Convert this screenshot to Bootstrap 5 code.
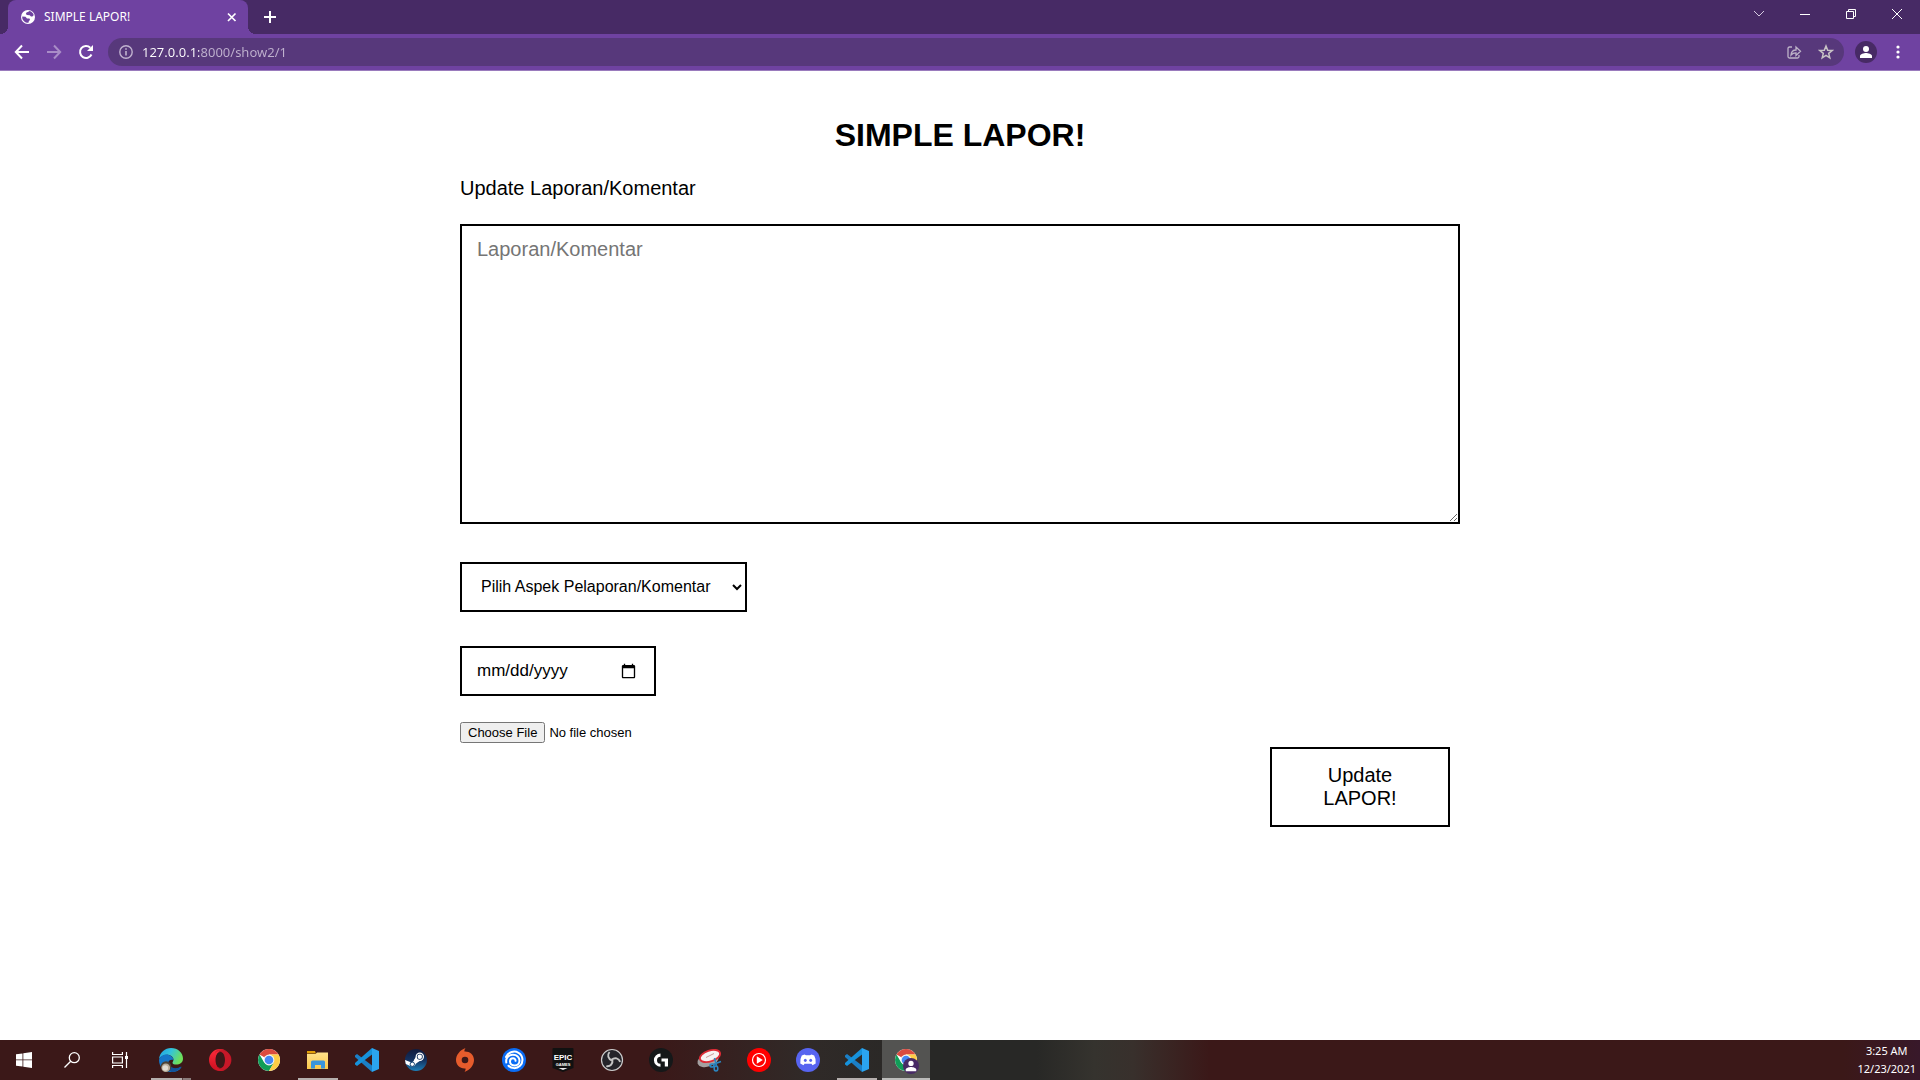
<!DOCTYPE html>
<html lang="id">
<head>
<meta charset="utf-8">
<meta name="viewport" content="width=device-width, initial-scale=1">
<title>SIMPLE LAPOR!</title>
<link href="https://cdn.jsdelivr.net/npm/bootstrap@5.3.0/dist/css/bootstrap.min.css" rel="stylesheet">
<style>
  :root { --strip: #472a65; --bar: #6f42a1; --pill: #57387b; }
  body { font-family: "Liberation Sans", Arial, sans-serif; color: #000; background: #fff; }
  svg { display: block; flex: none; }
  button.plain { background: none; border: 0; padding: 0; color: #fff; display: flex; align-items: center; justify-content: center; }

  /* browser chrome */
  .browser { font-family: "Noto Sans", "Open Sans", sans-serif; color: #fff; }
  .tab-strip { background: var(--strip); height: 34px; padding-left: 8px; }
  .page-tab { position: relative; width: 240px; height: 34px; background: var(--bar); border-radius: 8px 8px 0 0; padding: 0 8px 0 12px; font-size: 12px; }
  .page-tab::before, .page-tab::after { content: ""; position: absolute; bottom: 0; width: 8px; height: 8px; }
  .page-tab::before { left: -8px; background: radial-gradient(circle at 0 0, transparent 8px, var(--bar) 8px); }
  .page-tab::after { right: -8px; background: radial-gradient(circle at 100% 0, transparent 8px, var(--bar) 8px); }
  .page-tab span { line-height: 20px; }
  .new-tab { width: 28px; margin-left: 8px; }
  .win-btn { width: 46px; height: 28px; }
  .tool-bar { background: var(--bar); height: 37px; border-bottom: 1px solid #9a7bbd; padding: 0 6px; }
  .nav-btn { width: 32px; height: 32px; }
  .address { background: var(--pill); height: 28px; border-radius: 14px; padding: 0 10px; margin: 0 6px; }
  .address input { border: 0; outline: 0; padding: 0; height: 24px; font-size: 13px; min-width: 0;
    color: transparent; background: linear-gradient(to right, #fff 57px, #c0b2cf 57px); background-clip: text; -webkit-background-clip: text; }

  /* page */
  .report { width: 100%; max-width: 1000px; }
  .report h1 { font-size: 32px; line-height: 38px; font-weight: 700; margin: 45px 0 22px; }
  .report label.caption { font-size: 20px; line-height: 24px; margin-bottom: 24px; }
  .box { border: 2px solid #000; background: #fff; color: #000; border-radius: 0; }
  .report textarea { height: 300px; padding: 11px 15px; font-size: 20px; line-height: 24px; }
  .report textarea::placeholder { color: #757575; }
  .report select { width: 287px; height: 50px; padding: 0 1px 2px 15px; font-size: 16px; margin-top: 38px; }
  .report input[type=date] { width: 196px; height: 50px; padding: 0 15px; font-size: 17px; margin-top: 34px; }
  .report input[type=file] { font-size: 13px; line-height: 15px; margin-top: 26px; }
  .send { width: 180px; height: 80px; padding: 0 40px; font-size: 20px; line-height: 23px; margin: 4px 10px 0 0; }

  /* taskbar */
  .task-bar { height: 40px; color: #fff; font-family: "Noto Sans", "Open Sans", sans-serif;
    background: linear-gradient(to right, #3b1818 0, #3b1818 34%, #302a28 42%, #282826 48%, #282826 54%, #35332e 57%, #38302c 59%, #3b1818 63%, #3b1818 96%, #38182a 100%); }
  .task-bar button.plain { width: 48px; height: 40px; }
  .apps { gap: 1px; margin-left: 3px; }
  .apps button.plain.opened { background: linear-gradient(#b5afad, #b5afad) bottom / 40px 2px no-repeat; }
  .apps button.plain.stacked { background: linear-gradient(to right, #b5afad 31px, #5d4545 31px, #5d4545 32px, #8a7c7b 32px) bottom / 40px 2px no-repeat; }
  .apps button.plain.current { background: linear-gradient(#bcbcba, #bcbcba) bottom / 48px 2px no-repeat, #535351; }
  .clock { font-size: 11px; line-height: 18px; padding: 2px 4px 0 0; }
</style>
<script src="https://cdn.jsdelivr.net/npm/bootstrap@5.3.0/dist/js/bootstrap.bundle.min.js"></script>
</head>
<body class="d-flex flex-column min-vh-100">

<svg width="0" height="0" class="position-absolute" aria-hidden="true">
  <defs>
    <linearGradient id="edgeA" x1="0" y1="0" x2="1" y2="0.4"><stop offset="0" stop-color="#1f9fe0"/><stop offset=".5" stop-color="#33c3dc"/><stop offset="1" stop-color="#6ee05a"/></linearGradient>
    <linearGradient id="operaA" x1="0" y1="0" x2="0" y2="1"><stop offset="0" stop-color="#ff2b3a"/><stop offset="1" stop-color="#c80f20"/></linearGradient>
    <linearGradient id="steamA" x1="0" y1="0" x2="0" y2="1"><stop offset="0" stop-color="#101a3c"/><stop offset=".5" stop-color="#14315f"/><stop offset="1" stop-color="#1c7fb8"/></linearGradient>
    <linearGradient id="folderA" x1="0" y1="0" x2="0" y2="1"><stop offset="0" stop-color="#ffe18a"/><stop offset="1" stop-color="#fcc84a"/></linearGradient>
    <symbol id="chrome" viewBox="0 0 24 24">
      <circle cx="12" cy="12" r="11" fill="#fff"/>
      <path d="M12 12 2.500 6.500A11 11 0 0 1 21.500 6.500H12z" fill="#db4b3f"/>
      <path d="M2.500 6.500A11 11 0 0 0 12 23l5-8.500-5-2.500-4.700 2.700z" fill="#109d58"/>
      <path d="M21.500 6.500H12l4.800 8.200L12 23A11 11 0 0 0 21.500 6.500z" fill="#fecd45"/>
      <circle cx="12" cy="12" r="5.400" fill="#f4f4f4"/><circle cx="12" cy="12" r="4.300" fill="#4487f4"/>
    </symbol>
    <symbol id="vscode" viewBox="0 0 24 24">
      <path d="M0 7.500 2 6l15 11.500V24L0 9z" fill="#1b7fc6"/>
      <path d="M0 16.500 2 18 17 6.500V0L0 15z" fill="#1692db"/>
      <path d="M17 0 24 3V21l-7 3z" fill="#2ba4ef"/>
    </symbol>
    <symbol id="person" viewBox="0 0 16 16"><circle cx="8" cy="5" r="3" fill="#fff"/><path d="M2 14v-2c0-2 4-3 6-3s6 1 6 3v2z" fill="#fff"/></symbol>
  </defs>
</svg>

<header class="browser">
  <div class="tab-strip d-flex">
    <div class="page-tab d-flex align-items-center">
      <svg width="16" height="16" viewBox="0 0 16 16"><circle cx="8" cy="8" r="7" fill="#fff"/><path d="M6.500 3.500C8 3 9 2.500 9.500 2c2 .5 3.700 2 4.200 4-.8 1.200-1.500 1.800-2.700 1.500L9.700 6.300 7 6 5.800 5zM2.300 7.500 5.500 7.800 7 9.500H9.500l.5 1.200-1.300 1.800-.2 1.300c-3 .3-6-2-6.300-5z" fill="#6f42a1"/></svg>
      <span class="flex-grow-1 ms-2">SIMPLE LAPOR!</span>
      <button class="plain" aria-label="Close tab"><svg width="16" height="16" viewBox="0 0 16 16" stroke="#fff" stroke-width="1.700"><path d="M4 4.500l7.500 7.500M11.500 4.500L4 12"/></svg></button>
    </div>
    <button class="plain new-tab" aria-label="New tab"><svg width="14" height="14" viewBox="0 0 14 14" stroke="#fff" stroke-width="2"><path d="M7 1v12M1 7h12"/></svg></button>
    <div class="d-flex ms-auto">
      <button class="plain win-btn" aria-label="Search tabs"><svg width="12" height="12" viewBox="0 0 12 12" fill="none" stroke="#d5cbe0"><path d="M1 3l5 5 5-5"/></svg></button>
      <button class="plain win-btn" aria-label="Minimize"><svg width="10" height="10" viewBox="0 0 10 10" stroke="#fff"><path d="M0 5.500h10"/></svg></button>
      <button class="plain win-btn" aria-label="Restore"><svg width="10" height="10" viewBox="0 0 10 10" fill="none" stroke="#fff"><path d="M.5 2.500h7v7h-7zM2.500 2.500v-2h7v7h-2"/></svg></button>
      <button class="plain win-btn" aria-label="Close"><svg width="10" height="10" viewBox="0 0 10 10" stroke="#fff"><path d="M0 0l10 10M10 0L0 10"/></svg></button>
    </div>
  </div>
  <div class="tool-bar d-flex align-items-center">
    <button class="plain nav-btn" aria-label="Back"><svg width="16" height="16" viewBox="0 0 16 16" fill="none" stroke="#fff" stroke-width="2"><path d="M15 8H2M8 1.500L1.800 8 8 14.500"/></svg></button>
    <button class="plain nav-btn" aria-label="Forward"><svg width="16" height="16" viewBox="0 0 16 16" fill="none" stroke="#a98dc7" stroke-width="2"><path d="M1 8h13M8 1.500L14.200 8 8 14.500"/></svg></button>
    <button class="plain nav-btn" aria-label="Reload"><svg width="16" height="16" viewBox="0 0 16 16"><path d="M13.500 10.500A6 6 0 1 1 12.300 3.700" fill="none" stroke="#fff" stroke-width="2"/><path d="M15 1v6H9z" fill="#fff"/></svg></button>
    <div class="address d-flex align-items-center flex-grow-1">
      <svg width="16" height="16" viewBox="0 0 16 16"><circle cx="8" cy="8" r="6.200" fill="none" stroke="#c0b2cf" stroke-width="1.400"/><path d="M8 7v4.500M8 4.300v1.500" stroke="#c0b2cf" stroke-width="1.600"/></svg>
      <input class="flex-grow-1 ms-2" type="text" value="127.0.0.1:8000/show2/1" aria-label="Address">
      <button class="plain me-3" aria-label="Share"><svg width="16" height="16" viewBox="0 0 16 16" fill="none" stroke="#bdb3c8" stroke-width="1.300"><path d="M6 3H3.500Q2 3 2 4.500v8Q2 14 3.500 14h8q1.500 0 1.500-1.500V11"/><path d="M5 11c.3-3.500 2-5 5-5V3l4.500 4.300L10 11.500V8.800C8 8.800 6.500 9.300 5 11z"/></svg></button>
      <button class="plain" aria-label="Bookmark"><svg width="16" height="16" viewBox="0 0 16 16" fill="none" stroke="#c9c4c6" stroke-width="1.500"><path d="M8 2l1.700 4.200 4.500.3-3.500 2.900 1.100 4.400L8 11.400l-3.800 2.400 1.100-4.400-3.500-2.900 4.500-.3z"/></svg></button>
    </div>
    <button class="plain nav-btn" aria-label="Profile"><svg width="22" height="22" viewBox="0 0 22 22"><circle cx="11" cy="11" r="11" fill="#472a65"/><use href="#person" x="3" y="3" width="16" height="16"/></svg></button>
    <button class="plain nav-btn" aria-label="Menu"><svg width="4" height="14" viewBox="0 0 4 14" fill="#fff"><circle cx="2" cy="2" r="1.600"/><circle cx="2" cy="7" r="1.600"/><circle cx="2" cy="12" r="1.600"/></svg></button>
  </div>
</header>

<main class="flex-grow-1">
  <form class="report mx-auto d-flex flex-column align-items-start">
    <h1 class="align-self-center">SIMPLE LAPOR!</h1>
    <label class="caption" for="isi">Update Laporan/Komentar</label>
    <textarea id="isi" class="box w-100" placeholder="Laporan/Komentar"></textarea>
    <select class="box" aria-label="Aspek"><option>Pilih Aspek Pelaporan/Komentar</option></select>
    <input class="box" type="date" aria-label="Tanggal">
    <input type="file" aria-label="Lampiran">
    <button class="box send align-self-end" type="submit">Update LAPOR!</button>
  </form>
</main>

<footer class="task-bar d-flex">
  <button class="plain" aria-label="Start"><svg width="16" height="16" viewBox="0 0 16 16" fill="#fff"><path d="M0 2.300L6.500 1.400V7.500H0zM7.300 1.200L16 0v7.500H7.300zM0 8.300h6.500v6.300L0 13.700zM7.300 8.300H16V16l-8.700-1.300z"/></svg></button>
  <button class="plain" aria-label="Search"><svg width="16" height="16" viewBox="0 0 16 16" fill="none" stroke="#fff" stroke-width="1.300"><circle cx="10.300" cy="5.700" r="5"/><path d="M6.700 9.300L.5 15.500"/></svg></button>
  <button class="plain" aria-label="Task view"><svg width="16" height="16" viewBox="0 0 16 16" fill="none" stroke="#fff" stroke-width="1.200"><path d="M.6 0v2.500h9.800V0M.6 16v-2.500h9.800V16M.6 5h9.800v6H.6zM14.500 0v16"/><path d="M13 4h3v3h-3z" fill="#fff" stroke="none"/></svg></button>
  <div class="apps d-flex flex-grow-1">
    <button class="plain stacked" aria-label="Edge"><svg width="24" height="24" viewBox="0 0 24 24"><path d="M0 11C1 4 6 0 12 0c7 0 12 5 12 10.500 0 4-3 6-7 6-3.500 0-4-1.500-3-3 1.500-2.500-.5-5.500-4-6.500-4-1-8 1-10 4z" fill="url(#edgeA)"/><path d="M0 12c1-4 5.500-6.500 10-5 3 1 4.500 3.500 4.500 5-2-1-5 0-5.500 3-.5 4 4 6.500 8.500 5.500 3-.6 4.500-2 5-1.500-2 4-6 5-10.500 5C5 24 0 19 0 12z" fill="#1576c8"/><path d="M9.500 13c-.5 4.500 3.500 8 8.500 7 3-.6 4-2 4.500-1.500C20 22.500 16 24 12.500 24 8 22 6 17 9.500 13z" fill="#12529a"/><circle cx="7" cy="18.500" r="5.300" fill="#4c4336"/><circle cx="6.800" cy="19.700" r="4.300" fill="#b9ae9c"/><circle cx="6.300" cy="20" r="2.800" fill="#e2ddd3"/></svg></button>
    <button class="plain" aria-label="Opera"><svg width="24" height="24" viewBox="0 0 24 24"><path d="M10 4.500C16 0 23.500 5 23.500 12S16 24 10 19.500z" fill="#a51322"/><path fill-rule="evenodd" d="M12 1a11 11 0 1 0 0 22c2 0 4-.6 5.500-1.600C12 23 7.500 18.500 7.500 12S12 1 17.500 2.600A11 11 0 0 0 12 1z" fill="url(#operaA)"/><path d="M12.500 4C9.500 4 8 8 8 12s1.500 8 4.500 8 4.500-4 4.500-8-1.500-8-4.500-8z" fill="#3b1818"/><path d="M12 1C8 2 7 4 7 5c4-3.500 10-2 10 7s-6 10.500-10 7c0 2 2 4 5 4a11 11 0 0 0 0-22z" fill="#cf1a2b" opacity=".8"/></svg></button>
    <button class="plain" aria-label="Chrome"><svg width="24" height="24"><use href="#chrome"/></svg></button>
    <button class="plain opened" aria-label="Explorer"><svg width="24" height="24" viewBox="0 0 24 24"><path d="M1 3h8l1 2.500H1z" fill="#e3a008"/><path d="M1 6h8.500l1.500-1.500h11V21H1z" fill="url(#folderA)"/><path d="M5 20.500V14q0-1.500 1.500-1.500h11Q19 12.500 19 14v6.500h-4V17H9v3.500z" fill="#3995dc"/></svg></button>
    <button class="plain" aria-label="VS Code"><svg width="24" height="24"><use href="#vscode"/></svg></button>
    <button class="plain" aria-label="Steam"><svg width="24" height="24" viewBox="0 0 24 24"><circle cx="12" cy="12" r="11" fill="url(#steamA)"/><path d="M1 12l7 2.800L12 10l2 2-3.500 6-3 .5L1.800 16z" fill="#fff"/><path d="M10 12l3-5 5 4.500-6 4z" fill="#fff"/><circle cx="15.800" cy="8.800" r="4.200" fill="#fff"/><circle cx="15.800" cy="8.800" r="3" fill="#173561"/><circle cx="15.800" cy="8.800" r="2.200" fill="#fff"/><circle cx="8.300" cy="16.200" r="2.200" fill="none" stroke="#174573"/></svg></button>
    <button class="plain" aria-label="Origin"><svg width="24" height="24" viewBox="0 0 24 24"><path fill-rule="evenodd" d="M12.500 0c-1 1.500-1.200 2.500-1 3.500 5-.3 9.500 3 9.500 8.500 0 5-4 10-9.500 12 1-1.500 1.200-2.500 1-3.500C7 21 3 17 3 12 3 7 7 2 12.500 0zM12 8.700a3.300 3.300 0 1 0 0 6.600 3.300 3.300 0 0 0 0-6.600z" fill="#e65c2c"/></svg></button>
    <button class="plain" aria-label="Ubisoft"><svg width="24" height="24" viewBox="0 0 24 24" fill="none"><circle cx="12" cy="12" r="12" fill="#0a6cf5"/><g stroke="#fff" stroke-width="2" stroke-linecap="round"><path d="M4 9C6.500 3.500 12.500 2.500 16.500 4.800c5 3 5 9.700 1.500 13-3.300 3.200-8.500 3-11.500 0"/><path d="M4.300 14.500C3.500 10 6.500 7 10.500 6.800c4.500-.2 7 2.700 7 6 0 2.700-2 4.700-4.700 4.700-2.800 0-4.800-1.700-4.800-4 0-2 1.500-3.200 3-3.200 1.700 0 2.700 1.200 2.500 2.500"/></g></svg></button>
    <button class="plain" aria-label="Epic Games"><svg width="24" height="24" viewBox="0 0 24 24"><path d="M2.500 0h19q1 0 1 1v19L12 24 1.500 20V1q0-1 1-1z" fill="#111"/><text x="12" y="12" text-anchor="middle" font-family="Liberation Sans" font-weight="700" font-size="8" fill="#fff">EPIC</text><text x="12" y="18" text-anchor="middle" font-family="Liberation Sans" font-weight="700" font-size="4" fill="#fff">GAMES</text><path d="M7.500 20h9L12 22z" fill="#eee"/></svg></button>
    <button class="plain" aria-label="OBS"><svg width="24" height="24" viewBox="0 0 24 24" fill="none"><circle cx="12" cy="12" r="10.500" fill="#24242a" stroke="#ccc" stroke-width="1.200"/><g stroke="#c4c4c4" stroke-width="1.900"><path id="blade" d="M12 12.500C8 11 7 7 9.500 4"/><use href="#blade" transform="rotate(120 12 12)"/><use href="#blade" transform="rotate(240 12 12)"/></g></svg></button>
    <button class="plain" aria-label="Logitech G"><svg width="24" height="24" viewBox="0 0 24 24"><circle cx="12" cy="12" r="12" fill="#151819"/><path d="M11.500 5.500v3.200a3.500 3.500 0 0 0 0 7v3A6.600 6.600 0 0 1 11.500 5.500zM12.500 10.500H19v8h-3.200v-5h-3.300z" fill="#fff"/></svg></button>
    <button class="plain" aria-label="Snipping Tool"><svg width="24" height="24" viewBox="0 0 24 24" overflow="visible"><ellipse cx="10" cy="12" rx="11" ry="6.500" transform="rotate(-20 10 12)" fill="#a3a0a0"/><ellipse cx="12" cy="8" rx="10.500" ry="5.500" transform="rotate(-18 12 8)" fill="#f7f2f2" stroke="#dc2b35" stroke-width="1.800"/><path d="M8 9.500l8-4" stroke="#c99"/><g stroke="#2b86c0" stroke-width="1.600" fill="none"><path d="M23 13.500l-8 3M16.500 10l2 8"/><ellipse cx="14" cy="17.500" rx="2" ry="1.500"/><ellipse cx="18" cy="20.500" rx="1.800" ry="2.500"/></g></svg></button>
    <button class="plain" aria-label="YouTube Music"><svg width="24" height="24" viewBox="0 0 24 24"><circle cx="12" cy="12" r="12" fill="#f00"/><circle cx="12" cy="12" r="6.500" fill="none" stroke="#fff" stroke-width="1.200"/><path d="M9.800 8.300v7.400l6-3.700z" fill="#fff"/></svg></button>
    <button class="plain" aria-label="Discord"><svg width="24" height="24" viewBox="0 0 24 24"><circle cx="12" cy="12" r="12" fill="#5764f0"/><path d="M8.500 6.500l1.500.8h4l1.500-.8 2.700 1q2 3.500 1.500 8l-3.200 1.700-1-1.500h-7l-1 1.500-3.200-1.700q-.5-4.500 1.500-8z" fill="#fff"/><ellipse cx="9.300" cy="12.300" rx="1.400" ry="1.600" fill="#5764f0"/><ellipse cx="14.700" cy="12.300" rx="1.400" ry="1.600" fill="#5764f0"/></svg></button>
    <button class="plain opened" aria-label="VS Code window"><svg width="24" height="24"><use href="#vscode"/></svg></button>
    <button class="plain current" aria-label="Chrome window"><svg width="24" height="24" viewBox="0 0 24 24" overflow="visible"><use href="#chrome" width="24" height="24"/><circle cx="17" cy="18" r="8" fill="#472a65"/><use href="#person" x="10" y="11" width="14" height="14"/></svg></button>
  </div>
  <div class="clock text-center text-nowrap">3:25 AM<br>12/23/2021</div>
</footer>
</body>
</html>
